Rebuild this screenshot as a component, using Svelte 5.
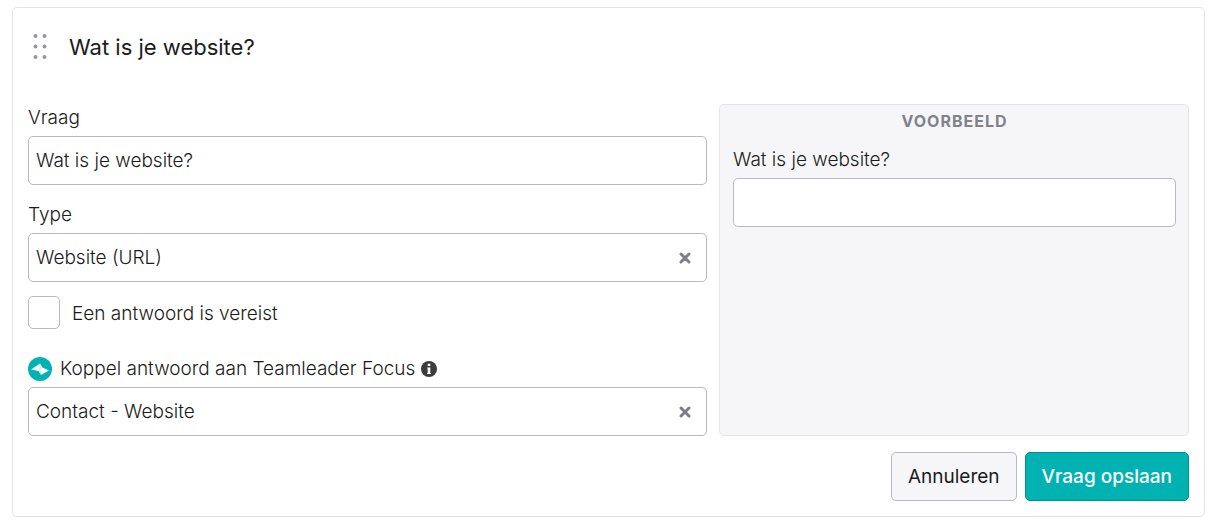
<script>
    let question = "Wat is je website?";
    let type = "Website (URL)";
    let required = false;
    let link = "Contact - Website";
    let answer = "";
</script>

<section class="card">
    <header>
        <svg class="handle" width="14" height="26" viewBox="0 0 14 26" aria-hidden="true">
            {#each [2, 12.5, 23] as y}
                <circle cx="2.5" cy={y} r="2" />
                <circle cx="11.5" cy={y} r="2" />
            {/each}
        </svg>
        <h1>{question}</h1>
    </header>

    <div class="columns">
        <form id="question-form" on:submit|preventDefault>
            <div class="field">
                <label for="question">Vraag</label>
                <input id="question" class="box" type="text" bind:value={question} />
            </div>

            <div class="field">
                <label for="type">Type</label>
                <div class="box picker">
                    <select id="type" bind:value={type}>
                        <option value="">Kies een type</option>
                        <option>Website (URL)</option>
                    </select>
                    <button class="clear" type="button" aria-label="Type wissen" on:click={() => (type = "")}>
                        <svg width="12" height="12" viewBox="0 0 12 12"><path d="M2 2l8 8M10 2l-8 8" /></svg>
                    </button>
                </div>
            </div>

            <label class="check">
                <input type="checkbox" bind:checked={required} />
                <span>Een antwoord is vereist</span>
            </label>

            <div class="field">
                <div class="label-row">
                    <svg width="24" height="24" viewBox="0 0 24 24" aria-hidden="true">
                        <circle cx="12" cy="12" r="12" fill="#00b2b2" />
                        <path d="M3 12.5L12 6.5L14.5 10.5L21 13.5L13 18L10.5 14Z" fill="#fff" />
                        <path d="M12 6.5V14L13 18" fill="none" stroke="#8fd8d8" stroke-width=".7" />
                    </svg>
                    <label for="link">Koppel antwoord aan Teamleader Focus</label>
                    <svg class="info" width="16" height="16" viewBox="0 0 16 16" aria-hidden="true">
                        <circle cx="8" cy="8" r="8" fill="#3b3b40" />
                        <path d="M6.7 2.7h2.6v2.4H6.7zM6.2 6.5h3.1v5.5h.7v1H6v-1h.7V7.5h-.5z" fill="#fff" />
                    </svg>
                </div>
                <div class="box picker">
                    <select id="link" bind:value={link}>
                        <option value="">Kies een veld</option>
                        <option>Contact - Website</option>
                    </select>
                    <button class="clear" type="button" aria-label="Koppeling wissen" on:click={() => (link = "")}>
                        <svg width="12" height="12" viewBox="0 0 12 12"><path d="M2 2l8 8M10 2l-8 8" /></svg>
                    </button>
                </div>
            </div>
        </form>

        <aside class="preview">
            <h2>VOORBEELD</h2>
            <label for="answer">{question}</label>
            <input id="answer" class="box" type="text" bind:value={answer} />
        </aside>
    </div>

    <footer>
        <button class="btn" type="button">Annuleren</button>
        <button class="btn primary" type="submit" form="question-form">Vraag opslaan</button>
    </footer>
</section>

<style>
    :global(body) {
        background: #fff;
    }

    .card {
        margin: 7px 13px 8px 12px;
        padding: 15px;
        border: 1px solid #e4e4e6;
        border-radius: 5px;
        color: #1a1c20;
        font-family: Inter, sans-serif;
        font-size: 19px;
        font-weight: 300;
        line-height: 28px;
    }

    .card * {
        box-sizing: border-box;
    }

    header {
        display: flex;
        align-items: center;
        gap: 22px;
        height: 48px;
        padding-left: 5px;
        margin-bottom: 33px;
    }

    .handle {
        fill: #96969f;
    }

    h1 {
        margin: 0;
        font-size: 22px;
        font-weight: 400;
    }

    .columns {
        display: grid;
        grid-template-columns: 679fr 470fr;
        gap: 12px;
    }

    form {
        display: flex;
        flex-direction: column;
    }

    .field {
        display: flex;
        flex-direction: column;
        gap: 4px;
    }

    .field + .field {
        margin-top: 16px;
    }

    .box {
        width: 100%;
        height: 49px;
        padding: 0 7px;
        border: 1px solid #b9b9bf;
        border-radius: 5px;
        background: #fff;
        color: inherit;
        font: inherit;
    }

    .picker {
        display: flex;
        align-items: center;
        padding-right: 15px;
    }

    select {
        flex: 1;
        height: 100%;
        padding: 0;
        border: none;
        appearance: none;
        background: none;
        color: inherit;
        font: inherit;
    }

    .clear {
        display: flex;
        padding: 0;
        border: none;
        background: none;
        cursor: pointer;
    }

    .clear path {
        stroke: #7e7e88;
        stroke-width: 3;
        stroke-linecap: round;
    }

    .check {
        display: flex;
        align-items: center;
        gap: 12px;
        margin: 14px 0 26px;
    }

    .check input {
        width: 32px;
        height: 33px;
        margin: 0;
        border: 1px solid #b9b9bf;
        border-radius: 5px;
        appearance: none;
    }

    .check input:checked {
        background: #00b2b2;
    }

    .check span {
        padding-top: 2px;
    }

    .label-row {
        display: flex;
        align-items: center;
        gap: 8px;
    }

    .label-row .info {
        margin-left: -2px;
    }

    .preview {
        display: flex;
        flex-direction: column;
        padding: 2px 12px 12px 13px;
        border: 1px solid #e4e4e6;
        border-radius: 5px;
        background: #f6f6f9;
    }

    h2 {
        margin: 0 0 11px;
        color: #82828c;
        font-size: 16px;
        font-weight: 700;
        letter-spacing: 1px;
        text-align: center;
    }

    .preview label {
        margin-bottom: 4px;
    }

    footer {
        display: flex;
        justify-content: flex-end;
        gap: 8px;
        margin-top: 16px;
    }

    .btn {
        height: 49px;
        padding: 0 16px;
        border: 1px solid #b9b9bf;
        border-radius: 5px;
        background: #f6f6f9;
        color: inherit;
        font: inherit;
        font-weight: 400;
        cursor: pointer;
    }

    .primary {
        border-color: #00908f;
        background: #00b2b2;
        color: #fff;
        font-weight: 500;
    }
</style>
